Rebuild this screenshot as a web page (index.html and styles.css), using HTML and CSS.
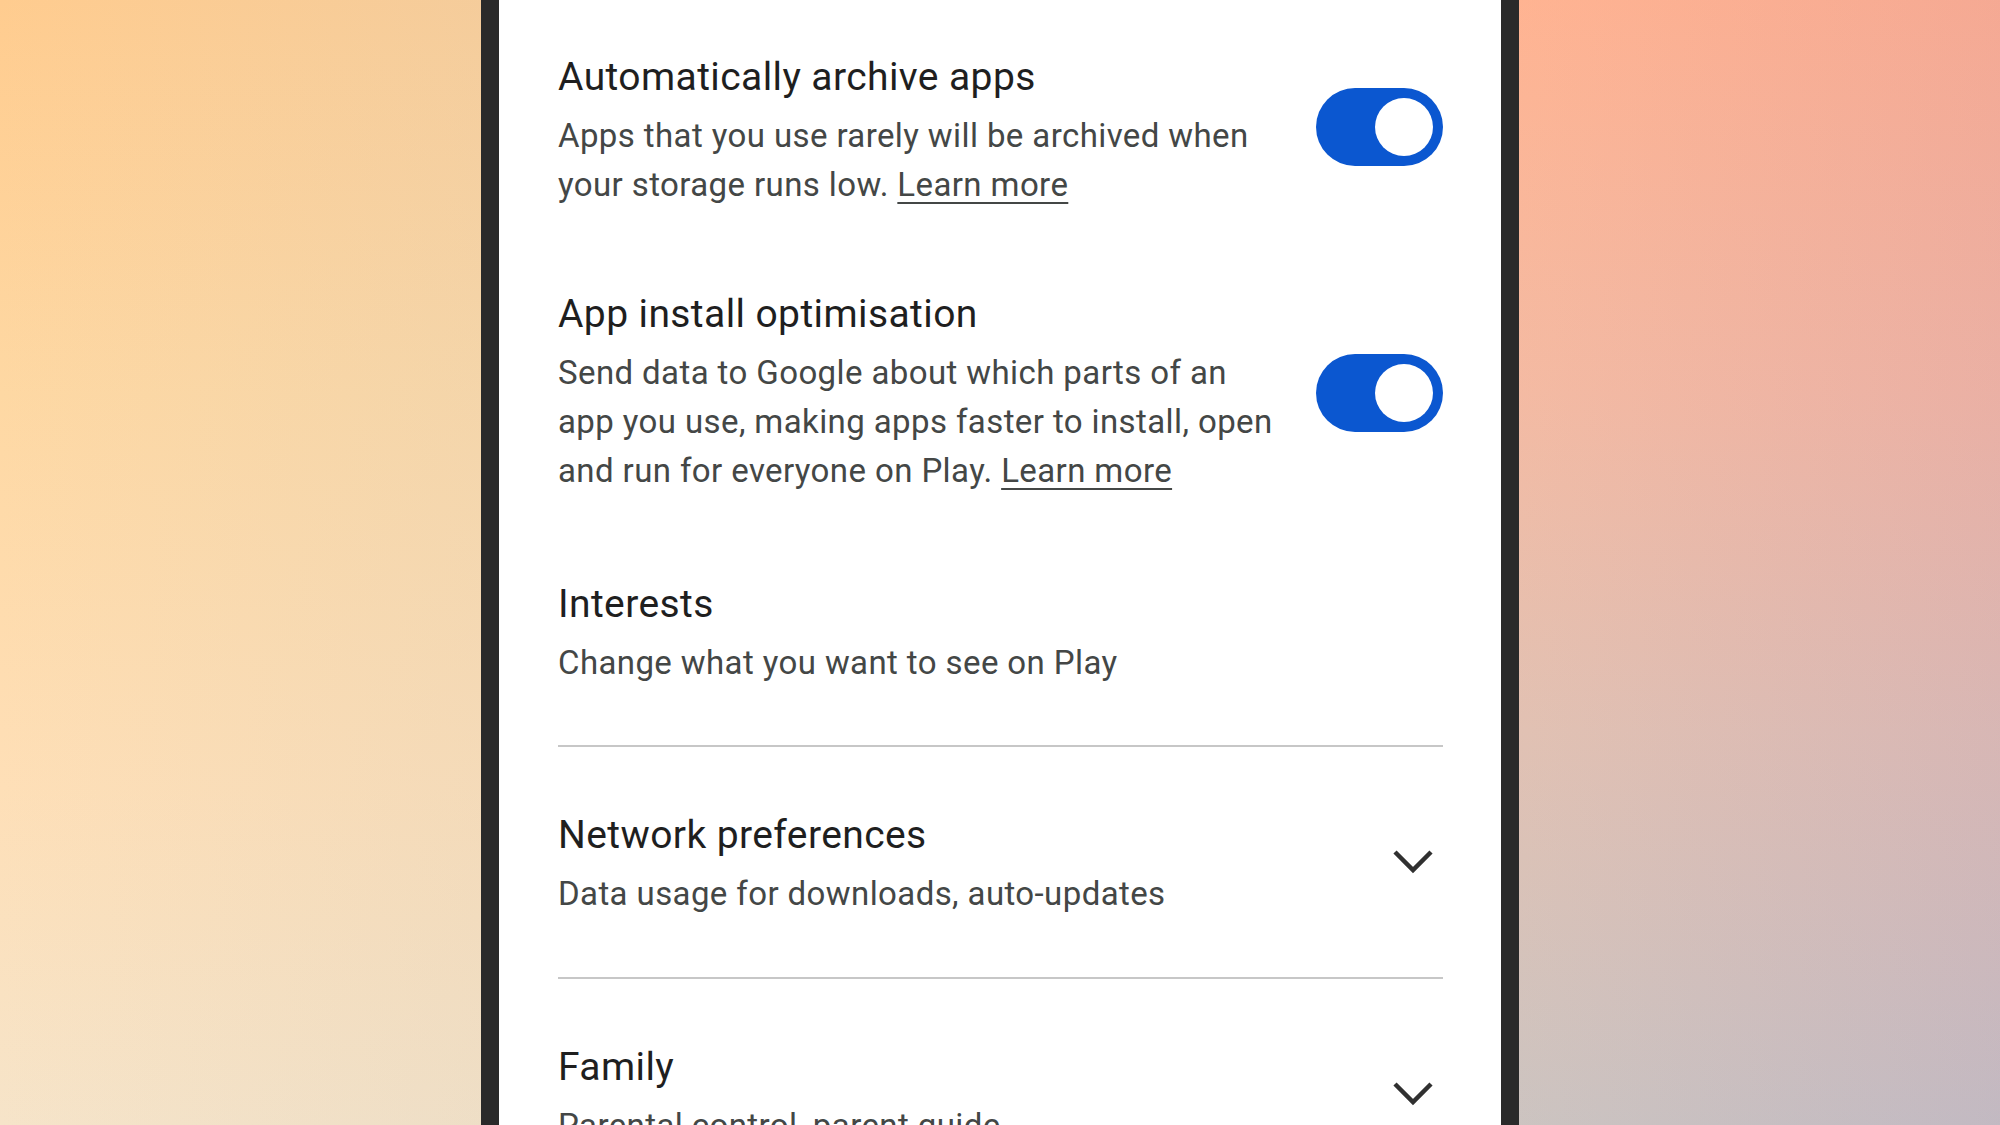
FILE: index.html
```html
<!DOCTYPE html>
<html lang="en">
<head>
    <meta charset="UTF-8">
    <meta name="viewport" content="width=device-width, initial-scale=1.0">
    <title>Play settings</title>
    <link rel="stylesheet" href="styles.css">
</head>
<body>

    <div class="page">

        <div class="backdrop backdrop-left"></div>

        <div class="phone">
            <div class="screen">

                <div class="setting first">
                    <div class="setting-text">
                        <div class="setting-title">Automatically archive apps</div>
                        <div class="setting-desc">Apps that you use rarely will be archived when<br>your storage runs low. <a href="#">Learn more</a></div>
                    </div>
                    <div class="switch"><span class="thumb"></span></div>
                </div>

                <div class="setting">
                    <div class="setting-text">
                        <div class="setting-title">App install optimisation</div>
                        <div class="setting-desc">Send data to Google about which parts of an<br>app you use, making apps faster to install, open<br>and run for everyone on Play. <a href="#">Learn more</a></div>
                    </div>
                    <div class="switch"><span class="thumb"></span></div>
                </div>

                <div class="setting interests">
                    <div class="setting-text">
                        <div class="setting-title">Interests</div>
                        <div class="setting-desc">Change what you want to see on Play</div>
                    </div>
                </div>

                <div class="divider"></div>

                <div class="setting group">
                    <div class="setting-text">
                        <div class="setting-title">Network preferences</div>
                        <div class="setting-desc">Data usage for downloads, auto-updates</div>
                    </div>
                    <svg class="chevron" width="40" height="24" viewBox="0 0 40 24">
                        <polyline points="2,2 20,20 38,2" fill="none" stroke="#303030" stroke-width="4.5"/>
                    </svg>
                </div>

                <div class="divider"></div>

                <div class="setting group">
                    <div class="setting-text">
                        <div class="setting-title">Family</div>
                        <div class="setting-desc">Parental control, parent guide</div>
                    </div>
                    <svg class="chevron" width="40" height="24" viewBox="0 0 40 24">
                        <polyline points="2,2 20,20 38,2" fill="none" stroke="#303030" stroke-width="4.5"/>
                    </svg>
                </div>

            </div>
        </div>

        <div class="backdrop backdrop-right"></div>

    </div>

</body>
</html>
```

FILE: styles.css
```css
body {
    margin: 0;
    height: 1125px;
    overflow: hidden;
    font-family: Roboto, "Noto Sans", Arial, sans-serif;
}

.page {
    display: flex;
    height: 1125px;
}

.backdrop {
    flex: 1;
}

.backdrop-left {
    background:
        linear-gradient(to right, rgba(230, 215, 195, 0), rgba(215, 205, 190, 0.25)),
        linear-gradient(180deg, #ffcc8f 0%, #fed8a3 35%, #fedfb7 70%, #f6e4c9 100%);
}

.backdrop-right {
    background:
        linear-gradient(to right, rgba(255, 200, 150, 0.15), rgba(190, 130, 160, 0.15)),
        linear-gradient(180deg, #ffb091 0%, #f2b8a5 35%, #dcc0b8 65%, #c3c3c8 100%);
}

.phone {
    width: 1002px;
    border-left: 18px solid #2a2a2a;
    border-right: 18px solid #2a2a2a;
    background-color: #fff;
}

.screen {
    padding: 12px 58px 0 59px;
}

.setting {
    display: flex;
    align-items: center;
    padding: 41px 0 40px 0;
}

.setting.first .switch {
    margin-bottom: 8px;
}

.setting.interests {
    padding: 45px 0 58px 0;
}

.setting.group {
    padding: 64px 0 59px 0;
}

.setting-text {
    flex: 1;
}

.setting-title {
    font-size: 39px;
    line-height: 48px;
    letter-spacing: 0.4px;
    color: #1f1f1f;
}

.setting-desc {
    margin-top: 10px;
    font-size: 33px;
    line-height: 49px;
    letter-spacing: 0.4px;
    color: #444746;
}

.setting-desc a {
    color: #444746;
    text-decoration: underline;
    text-decoration-thickness: 2px;
    text-underline-offset: 6px;
}

.switch {
    width: 127px;
    height: 78px;
    border-radius: 39px;
    background-color: #0b57d0;
    display: flex;
    align-items: center;
    justify-content: flex-end;
    padding: 0 10px;
    box-sizing: border-box;
}

.thumb {
    width: 58px;
    height: 58px;
    border-radius: 50%;
    background-color: #fff;
}

.chevron {
    margin: 0 10px 5px 0;
}

.divider {
    height: 2px;
    background-color: #c7c7c7;
}
```
